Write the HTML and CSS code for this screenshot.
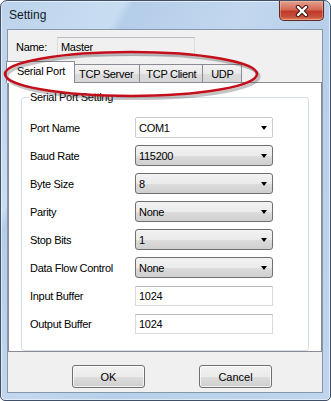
FILE: index.html
```html
<!DOCTYPE html>
<html lang="en">
<head>
	<meta charset="UTF-8">
	<title>Setting</title>
	<link rel="stylesheet" href="styles.css">
</head>
<body>
<div class="window">
	<div class="titlebar">
		<span class="title">Setting</span>
		<a href="javascript:;" class="close">
			<svg width="14" height="12" viewBox="0 0 14 12">
				<path d="M3 2 L11 10 M11 2 L3 10" stroke="#3a1a14" stroke-width="4.4" stroke-linecap="round"/>
				<path d="M3 2 L11 10 M11 2 L3 10" stroke="#fff" stroke-width="2.4" stroke-linecap="round"/>
			</svg>
		</a>
	</div>
	<div class="client">
		<div class="name-row">
			<label>Name:</label>
			<div class="textbox readonly name-box">Master</div>
		</div>
		<div class="tabs">
			<div class="tab active">Serial Port</div>
			<div class="tab">TCP Server</div>
			<div class="tab">TCP Client</div>
			<div class="tab udp">UDP</div>
		</div>
		<div class="page">
			<fieldset class="group">
				<legend>Serial Port Setting</legend>
				<div class="row"><label>Port Name</label><div class="combo edit"><span>COM1</span><i class="arrow"></i></div></div>
				<div class="row"><label>Baud Rate</label><div class="combo"><span>115200</span><i class="arrow"></i></div></div>
				<div class="row"><label>Byte Size</label><div class="combo"><span>8</span><i class="arrow"></i></div></div>
				<div class="row"><label>Parity</label><div class="combo"><span>None</span><i class="arrow"></i></div></div>
				<div class="row"><label>Stop Bits</label><div class="combo"><span>1</span><i class="arrow"></i></div></div>
				<div class="row"><label>Data Flow Control</label><div class="combo"><span>None</span><i class="arrow"></i></div></div>
				<div class="row"><label>Input Buffer</label><div class="textbox field">1024</div></div>
				<div class="row"><label>Output Buffer</label><div class="textbox field">1024</div></div>
			</fieldset>
		</div>
		<div class="buttons">
			<button class="btn">OK</button>
			<button class="btn">Cancel</button>
		</div>
	</div>
	<!-- hand drawn marker round the tabs -->
	<svg class="mark" width="331" height="120" viewBox="0 0 331 120">
		<ellipse cx="133" cy="76.5" rx="126" ry="22" fill="none" stroke="rgba(60,60,60,0.3)" stroke-width="3.2"/>
		<ellipse cx="131" cy="74" rx="126" ry="22" fill="none" stroke="#c40f1b" stroke-width="2.6"/>
	</svg>
</div>
</body>
</html>
```
FILE: styles.css
```css
body,fieldset,legend,button{margin:0;padding:0}
body{font:11px "Liberation Sans", Arial, sans-serif;letter-spacing:-0.3px;color:#000;background:#fff;}
label{display:block}

.window{
    position: relative;
    box-sizing: border-box;
    width:331px;
    height:401px;
    padding:0 7px 7px 6px;
    border:1px solid #3f5067;
    border-radius:7px 7px 5px 5px;
    background: linear-gradient(120deg, #bcd3ec 0%, #c9ddf2 22%, #b4cde9 24%, #c3d8ef 45%, #b7cfea 60%, #c0d6ee 100%);
    box-shadow: inset 0 0 0 1px rgba(255,255,255,0.55);
}
.titlebar{
    height:28px;
    display:flex;
    align-items:flex-start;
    justify-content:space-between;
}
.title{
    font-size:12px;
    letter-spacing:0;
    color:#111a24;
    margin:7px 0 0 2px;
}
.close{
    width:43px;
    height:19px;
    margin-right:-1px;
    display:flex;
    align-items:center;
    justify-content:center;
    border:1px solid #5e2a22;
    border-top:0;
    border-radius:0 0 5px 5px;
    background: linear-gradient(#e3a08f 0%, #d46a55 45%, #c0392a 55%, #c8523c 85%, #e08a66 100%);
    box-shadow: inset 0 0 0 1px rgba(255,220,200,0.35);
}
.client{
    height:364px;
    box-sizing:border-box;
    border:1px solid #8797ab;
    background:#f0f0f0;
    display:flex;
    flex-direction:column;
}
.name-row{
    display:flex;
    align-items:center;
    margin-top:7px;
    padding-left:8px;
}
.name-row label{width:41px}
.textbox{
    box-sizing:border-box;
    height:20px;
    padding:0 3px;
    display:flex;
    align-items:center;
    background:#fff;
    border:1px solid #d7dbe1;
    border-top-color:#b7bbc2;
}
.name-box{width:138px;height:19px;}
.readonly{background:#f0f0f0;}

.tabs{
    display:flex;
    align-items:flex-end;
    margin-top:5px;
    height:21px;
    position:relative;
    z-index:1;
}
.tab{
    box-sizing:border-box;
    height:18px;
    padding:3px 6px 0;
    border:1px solid #898c95;
    border-bottom:0;
    border-left:0;
    background:linear-gradient(#f3f3f3, #e9e9e9 50%, #dcdcdc 51%, #d6d6d6);
    white-space:nowrap;
}
.tab.udp{min-width:39px;text-align:center;}
.tab.active{
    height:22px;
    margin:0 -2px -1px -2px;
    padding:3px 9px 0 10px;
    border-left:1px solid #898c95;
    background:#fff;
    position:relative;
    z-index:2;
}
.page{
    height:270px;
    box-sizing:border-box;
    border:1px solid #898c95;
    background:#fff;
    padding:8px 12px 0 12px;
}
.group{
    border:1px solid #d5dfe5;
    border-radius:3px;
    padding:13px 0 16px 8px;
}
.group legend{
    padding:0 1px;
    line-height:13px;
    margin-left:-1px;
}
.row{
    display:flex;
    align-items:center;
    height:21px;
    margin-bottom:7px;
}
.row:last-child{margin-bottom:0}
.row label{width:105px}
.combo{
    box-sizing:border-box;
    width:138px;
    height:21px;
    padding-left:3px;
    display:flex;
    align-items:center;
    border:1px solid #707070;
    border-radius:3px;
    background:linear-gradient(#f2f2f2 0%, #ebebeb 50%, #dddddd 51%, #cfcfcf 100%);
}
.combo.edit{
    background:#fff;
    border-color:#c9ccd2;
    border-radius:2px;
}
.combo span{flex:1}
.arrow{
    width:0;
    height:0;
    margin-right:5px;
    border-left:3.5px solid transparent;
    border-right:3.5px solid transparent;
    border-top:4px solid #000;
}
.field{width:138px;height:20px;}

.buttons{
    display:flex;
    gap:54px;
    padding-left:64px;
    margin-top:13px;
}
.btn{
    width:73px;
    height:23px;
    font:inherit;
    color:#000;
    border:1px solid #707070;
    border-radius:3px;
    background:linear-gradient(#f2f2f2 0%, #ebebeb 50%, #dddddd 51%, #cfcfcf 100%);
    box-shadow: inset 0 0 0 1px rgba(255,255,255,0.7);
}

.mark{
    position:absolute;
    left:-1px;
    top:-1px;
    z-index:5;
    pointer-events:none;
}
```
